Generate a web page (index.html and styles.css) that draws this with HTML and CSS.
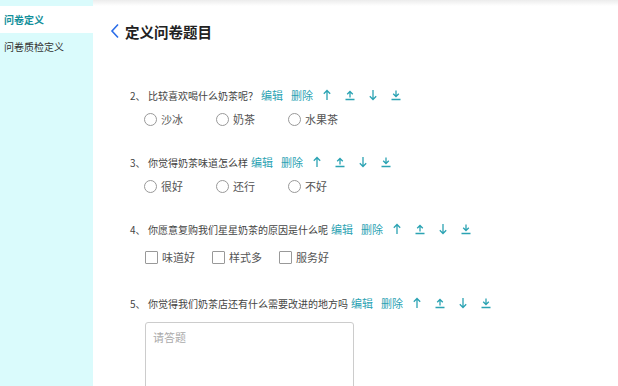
FILE: index.html
```html
<!DOCTYPE html>
<html>
<head>
    <title>定义问卷题目</title>
    <link rel="stylesheet" href="styles.css">
</head>
<body>
    <div class="page">
        <div class="sidebar">
            <div class="menu-item active">问卷定义</div>
            <div class="menu-item">问卷质检定义</div>
        </div>
        <div class="main">
            <div class="top-shadow"></div>
            <div class="header">
                <svg class="back" width="10" height="16" viewBox="0 0 10 16"><polyline points="8,1.5 2,8 8,14.5" fill="none" stroke="#2b6de8" stroke-width="1.6"/></svg>
                <span class="title">定义问卷题目</span>
            </div>
            <div class="questions">
                <div class="question">
                    <div class="q-title">
                        <span class="q-num">2、</span>比较喜欢喝什么奶茶呢？
                        <span class="link first">编辑</span><span class="link">删除</span>
                        <span class="icons">
                            <svg class="ico" viewBox="0 0 10 12"><path d="M5 1.5V11M1.8 4.7L5 1.5L8.2 4.7"/></svg>
                            <svg class="ico" viewBox="0 0 10 12"><path d="M5 2.5V8.5M2.2 5.3L5 2.5L7.8 5.3M0.5 10.5H9.5"/></svg>
                            <svg class="ico" viewBox="0 0 10 12"><path d="M5 1V10.5M1.8 7.3L5 10.5L8.2 7.3"/></svg>
                            <svg class="ico" viewBox="0 0 10 12"><path d="M5 1.5V7.5M2.2 4.7L5 7.5L7.8 4.7M0.5 10.5H9.5"/></svg>
                        </span>
                    </div>
                    <div class="options">
                        <label class="radio"><span class="circle"></span>沙冰</label>
                        <label class="radio"><span class="circle"></span>奶茶</label>
                        <label class="radio"><span class="circle"></span>水果茶</label>
                    </div>
                </div>
                <div class="question">
                    <div class="q-title">
                        <span class="q-num">3、</span>你觉得奶茶味道怎么样
                        <span class="link first">编辑</span><span class="link">删除</span>
                        <span class="icons">
                            <svg class="ico" viewBox="0 0 10 12"><path d="M5 1.5V11M1.8 4.7L5 1.5L8.2 4.7"/></svg>
                            <svg class="ico" viewBox="0 0 10 12"><path d="M5 2.5V8.5M2.2 5.3L5 2.5L7.8 5.3M0.5 10.5H9.5"/></svg>
                            <svg class="ico" viewBox="0 0 10 12"><path d="M5 1V10.5M1.8 7.3L5 10.5L8.2 7.3"/></svg>
                            <svg class="ico" viewBox="0 0 10 12"><path d="M5 1.5V7.5M2.2 4.7L5 7.5L7.8 4.7M0.5 10.5H9.5"/></svg>
                        </span>
                    </div>
                    <div class="options">
                        <label class="radio"><span class="circle"></span>很好</label>
                        <label class="radio"><span class="circle"></span>还行</label>
                        <label class="radio"><span class="circle"></span>不好</label>
                    </div>
                </div>
                <div class="question">
                    <div class="q-title">
                        <span class="q-num">4、</span>你愿意复购我们星星奶茶的原因是什么呢
                        <span class="link first">编辑</span><span class="link">删除</span>
                        <span class="icons">
                            <svg class="ico" viewBox="0 0 10 12"><path d="M5 1.5V11M1.8 4.7L5 1.5L8.2 4.7"/></svg>
                            <svg class="ico" viewBox="0 0 10 12"><path d="M5 2.5V8.5M2.2 5.3L5 2.5L7.8 5.3M0.5 10.5H9.5"/></svg>
                            <svg class="ico" viewBox="0 0 10 12"><path d="M5 1V10.5M1.8 7.3L5 10.5L8.2 7.3"/></svg>
                            <svg class="ico" viewBox="0 0 10 12"><path d="M5 1.5V7.5M2.2 4.7L5 7.5L7.8 4.7M0.5 10.5H9.5"/></svg>
                        </span>
                    </div>
                    <div class="options checks">
                        <label class="check"><span class="box"></span>味道好</label>
                        <label class="check"><span class="box"></span>样式多</label>
                        <label class="check"><span class="box"></span>服务好</label>
                    </div>
                </div>
                <div class="question">
                    <div class="q-title">
                        <span class="q-num">5、</span>你觉得我们奶茶店还有什么需要改进的地方吗
                        <span class="link first">编辑</span><span class="link">删除</span>
                        <span class="icons">
                            <svg class="ico" viewBox="0 0 10 12"><path d="M5 1.5V11M1.8 4.7L5 1.5L8.2 4.7"/></svg>
                            <svg class="ico" viewBox="0 0 10 12"><path d="M5 2.5V8.5M2.2 5.3L5 2.5L7.8 5.3M0.5 10.5H9.5"/></svg>
                            <svg class="ico" viewBox="0 0 10 12"><path d="M5 1V10.5M1.8 7.3L5 10.5L8.2 7.3"/></svg>
                            <svg class="ico" viewBox="0 0 10 12"><path d="M5 1.5V7.5M2.2 4.7L5 7.5L7.8 4.7M0.5 10.5H9.5"/></svg>
                        </span>
                    </div>
                    <textarea class="answer" placeholder="请答题"></textarea>
                </div>
            </div>
        </div>
    </div>
</body>
</html>
```

FILE: styles.css
```css
body {
    margin: 0;
    font-family: "Noto Sans CJK SC", "Noto Sans", sans-serif;
    color: #333;
    background: #fff;
    overflow: hidden;
}

.page {
    display: flex;
    height: 386px;
}

.sidebar {
    width: 93px;
    background-color: #dafbfc;
    padding-top: 6px;
}

.menu-item {
    height: 27px;
    line-height: 27px;
    padding-left: 4px;
    font-size: 10px;
    color: #333;
}

.menu-item.active {
    background-color: #fff;
    color: #14909b;
    font-weight: bold;
}

.main {
    flex: 1;
}

.top-shadow {
    height: 6px;
    background: linear-gradient(#ececec, #fff);
}

.header {
    display: flex;
    align-items: center;
    height: 50px;
    padding-left: 17px;
}

.back {
    margin-right: 5px;
}

.title {
    font-size: 14.5px;
    font-weight: bold;
    color: #222;
}

.questions {
    padding-top: 29px;
    padding-left: 37px;
}

.question {
    margin-bottom: 23px;
}

.q-title {
    display: flex;
    align-items: center;
    height: 20px;
    font-size: 10px;
    color: #444;
}

.q-num {
    width: 18px;
}

.link {
    color: #2ba3b3;
    font-size: 11px;
    margin-left: 8px;
}

.link.first {
    margin-left: 3px;
}

.icons {
    display: flex;
    margin-left: 9px;
    gap: 13px;
}

.ico {
    width: 10px;
    height: 12px;
    fill: none;
    stroke: #2ba3b3;
    stroke-width: 1.3;
}

.options {
    display: flex;
    margin-top: 4px;
    padding-left: 14px;
    height: 20px;
    align-items: center;
    font-size: 11px;
    color: #555;
}

.radio {
    display: flex;
    align-items: center;
    width: 72px;
}

.circle {
    width: 11px;
    height: 11px;
    border: 1px solid #999;
    border-radius: 50%;
    margin-right: 4px;
}

.checks {
    margin-top: 8px;
    padding-left: 15px;
}

.question:has(.checks) {
    margin-bottom: 26px;
}

.check {
    display: flex;
    align-items: center;
    margin-right: 17px;
}

.box {
    width: 11px;
    height: 11px;
    border: 1px solid #999;
    border-radius: 1px;
    margin-right: 4px;
}

.answer {
    display: block;
    margin-top: 9px;
    margin-left: 15px;
    width: 209px;
    height: 80px;
    box-sizing: border-box;
    border: 1px solid #ccc;
    border-radius: 3px;
    padding: 6px 7px;
    font-family: "Noto Sans CJK SC", sans-serif;
    font-size: 11px;
    resize: none;
    outline: none;
}

.answer::placeholder {
    color: #aaa;
}
```
